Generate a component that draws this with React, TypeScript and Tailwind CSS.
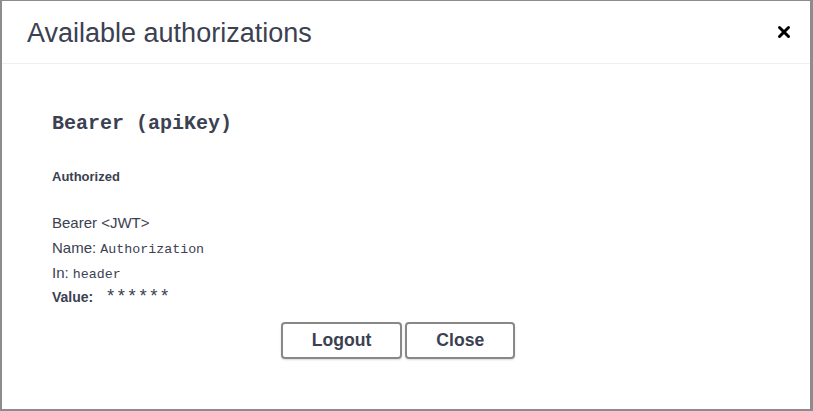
import { X } from "lucide-react";

const sans = "font-['Liberation_Sans',Arial,sans-serif]";
const mono = "font-['Liberation_Mono','DejaVu_Sans_Mono',monospace]";

export default function App() {
  return (
    <div className="w-[813px] h-[411px] bg-[#8c8c8c] pt-px pl-[2px] pr-[3px] pb-[2px]">
      <div className={`h-full w-full bg-white ${sans} text-[#3b4151]`}>
        {/* Header */}
        <div className="h-[63px] flex items-center justify-between border-b border-[#eeeeee] pl-[25px] pr-[17px]">
          <h3 className="text-[27px] leading-none font-medium pt-[2px]">Available authorizations</h3>
          <button className="text-black">
            <X size={18} strokeWidth={4} />
          </button>
        </div>

        {/* Body */}
        <div className="pl-[50px] pt-[47px]">
          <h4 className={`${mono} text-[20px] leading-[26px] font-bold`}>Bearer (apiKey)</h4>
          <h6 className="text-[13px] font-bold mt-[32px] leading-[16px]">Authorized</h6>

          <div className="mt-[25px] text-[15px] leading-[25px]">
            <p className="h-[25px]">Bearer &lt;JWT&gt;</p>
            <p className="h-[25px]">
              Name: <code className={`${mono} text-[13.3px] leading-none`}>Authorization</code>
            </p>
            <p className="h-[25px]">
              In: <code className={`${mono} text-[13.3px] leading-none`}>header</code>
            </p>
            <div className="h-[25px] flex items-baseline">
              <label className="text-[14px] font-bold">Value:</label>
              <code className={`${mono} text-[18px] leading-none ml-[12px]`}>******</code>
            </div>
          </div>
        </div>

        {/* Buttons */}
        <div className="flex justify-center gap-[3px] pr-[16px] mt-[12px]">
          <button className="h-[37px] px-[29px] border-2 border-[#888888] rounded-[4px] shadow-[0_1px_2px_rgba(0,0,0,0.15)] text-[17.6px] font-bold">
            Logout
          </button>
          <button className="h-[37px] px-[29px] border-2 border-[#888888] rounded-[4px] shadow-[0_1px_2px_rgba(0,0,0,0.15)] text-[17.6px] font-bold">
            Close
          </button>
        </div>
      </div>
    </div>
  );
}
